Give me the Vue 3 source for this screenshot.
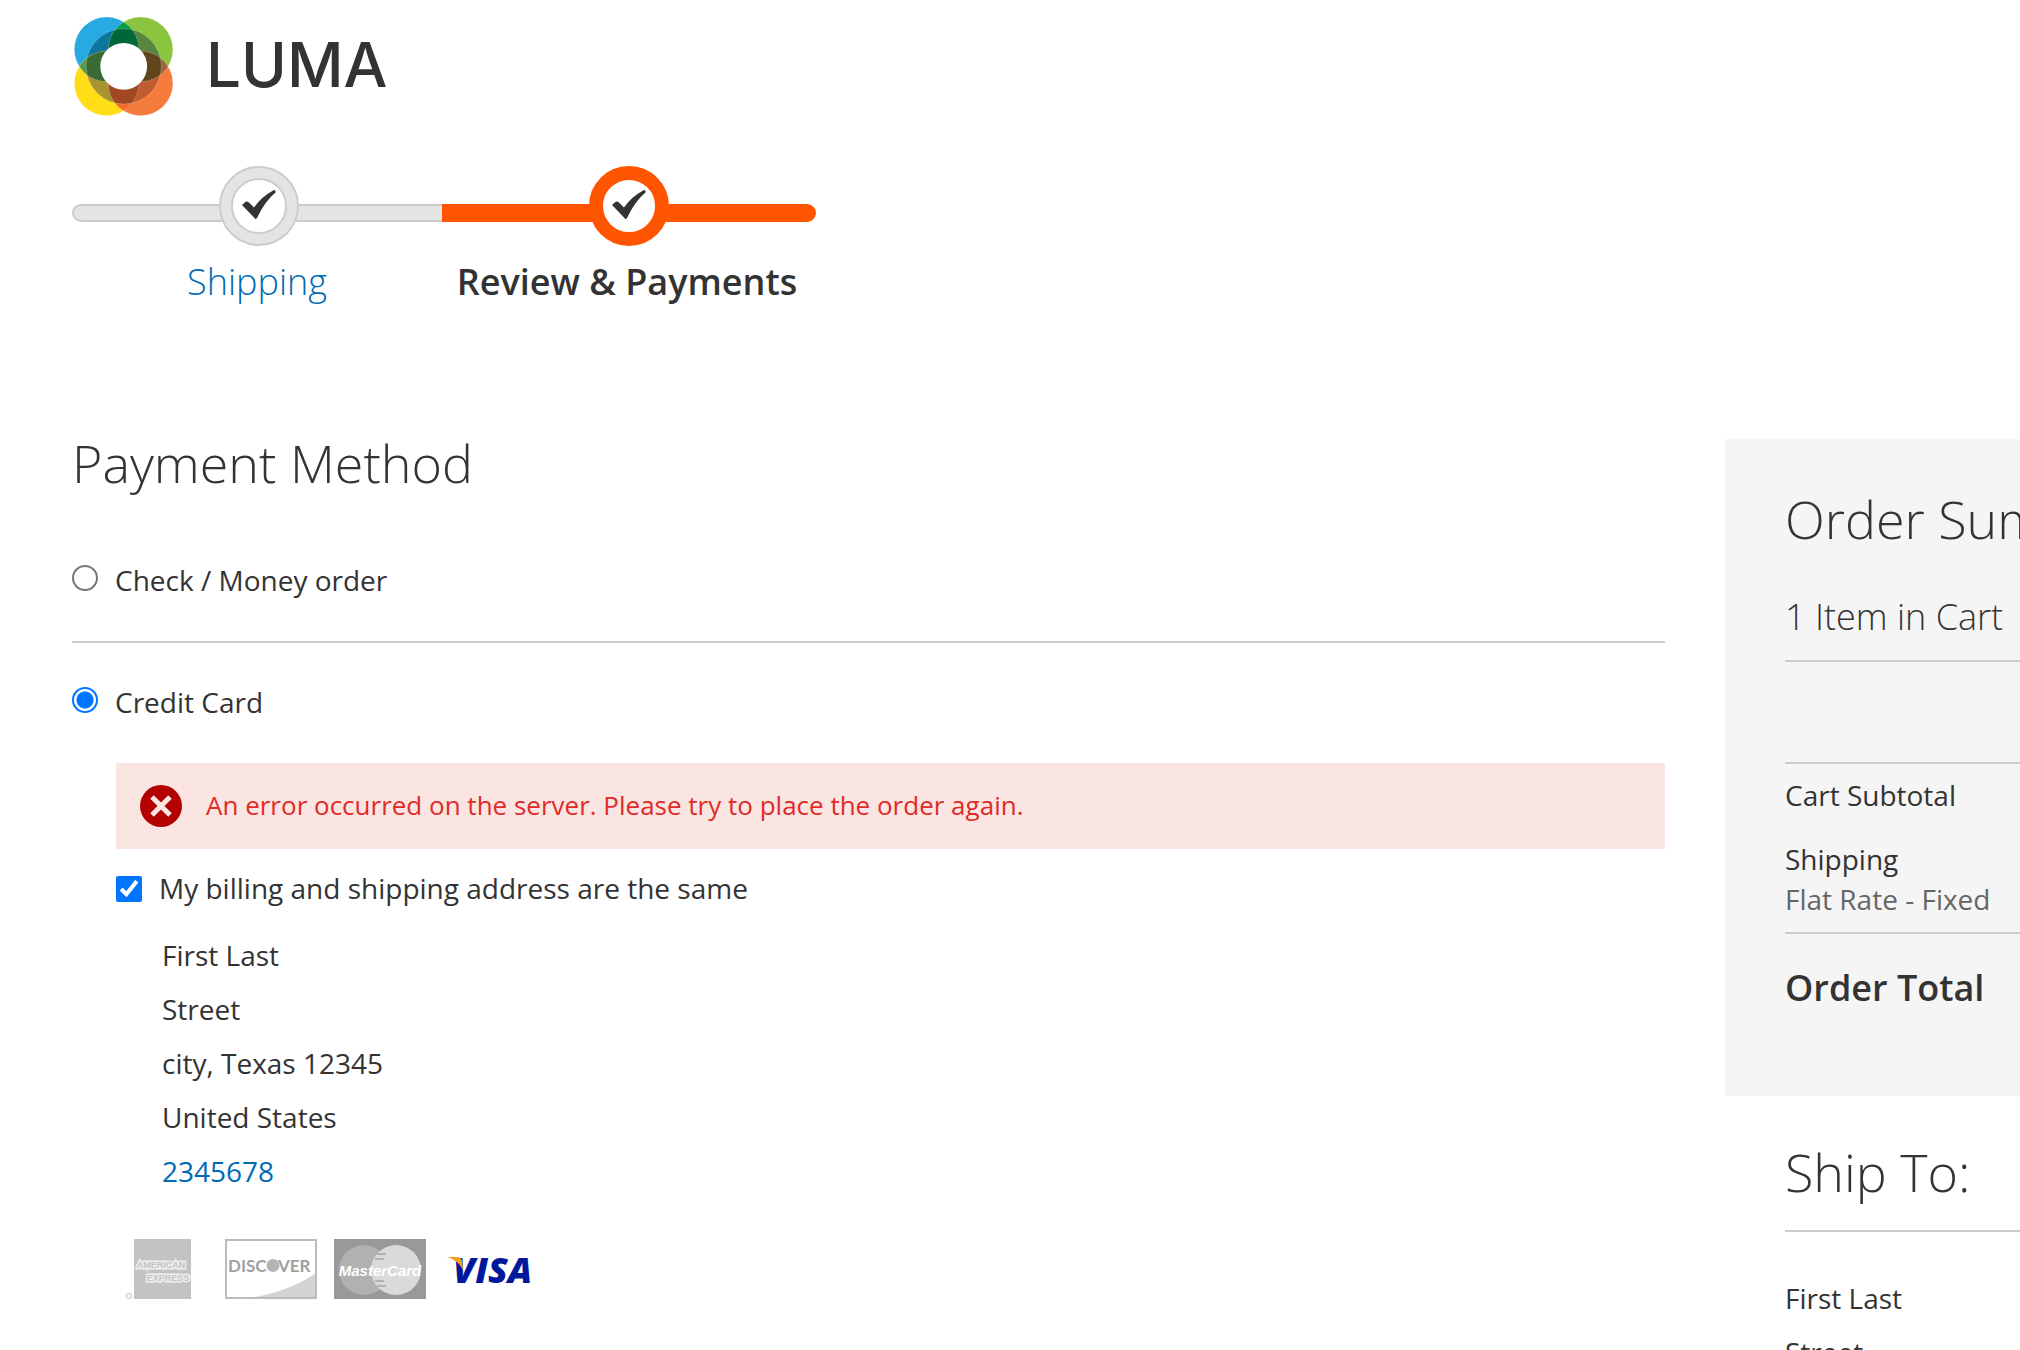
<script setup>
import { ref } from 'vue'

const method = ref('card')
const sameAddress = ref(true)
const steps = [
  { label: 'Shipping', href: '#shipping', active: false },
  { label: 'Review & Payments', href: '', active: true },
]
const address = ['First Last', 'Street', 'city, Texas 12345', 'United States']
</script>

<template>
  <div class="page">
    <header class="header">
      <a class="logo" href="#" aria-label="Luma">
        <svg class="logo-mark" viewBox="0 0 100 100" aria-hidden="true">
          <defs>
            <clipPath id="disc"><circle cx="49.7" cy="49.3" r="37.7" /></clipPath>
            <clipPath id="tl"><circle cx="32.6" cy="32.3" r="32.3" /></clipPath>
            <clipPath id="br"><circle cx="66.6" cy="66.4" r="32.3" /></clipPath>
          </defs>
          <circle cx="32.6" cy="32.3" r="32.3" fill="#27a9e1" />
          <circle cx="66.6" cy="32.3" r="32.3" fill="#8bc53f" />
          <circle cx="32.6" cy="66.4" r="32.3" fill="#ffde17" />
          <circle cx="66.6" cy="66.4" r="32.3" fill="#f47b3b" />
          <g clip-path="url(#tl)">
            <circle cx="66.6" cy="32.3" r="32.3" fill="#00a04a" />
            <circle cx="32.6" cy="66.4" r="32.3" fill="#559b4b" />
          </g>
          <g clip-path="url(#br)">
            <circle cx="66.6" cy="32.3" r="32.3" fill="#94683a" />
            <circle cx="32.6" cy="66.4" r="32.3" fill="#f26a2e" />
          </g>
          <g clip-path="url(#disc)">
            <circle cx="32.6" cy="32.3" r="32.3" fill="#0c769e" />
            <circle cx="66.6" cy="32.3" r="32.3" fill="#57873e" />
            <circle cx="32.6" cy="66.4" r="32.3" fill="#a89430" />
            <circle cx="66.6" cy="66.4" r="32.3" fill="#c05c2f" />
            <g clip-path="url(#tl)">
              <circle cx="66.6" cy="32.3" r="32.3" fill="#006838" />
              <circle cx="32.6" cy="66.4" r="32.3" fill="#3a6b35" />
            </g>
            <g clip-path="url(#br)">
              <circle cx="66.6" cy="32.3" r="32.3" fill="#61461d" />
              <circle cx="32.6" cy="66.4" r="32.3" fill="#9f4823" />
            </g>
          </g>
          <g fill="none" stroke="#fff" stroke-opacity=".35" stroke-width=".6">
            <circle cx="49.7" cy="49.3" r="37.7" />
            <circle cx="32.6" cy="32.3" r="32.3" />
            <circle cx="66.6" cy="32.3" r="32.3" />
            <circle cx="32.6" cy="66.4" r="32.3" />
            <circle cx="66.6" cy="66.4" r="32.3" />
          </g>
          <circle cx="49.7" cy="49.3" r="23.4" fill="#fff" />
        </svg>
        <span class="logo-name">LUMA</span>
      </a>
    </header>

    <ol class="steps">
      <li v-for="s in steps" :key="s.label" class="step" :class="{ active: s.active }">
        <span class="badge">
          <span class="badge-inner">
            <svg viewBox="0 0 52 52" aria-hidden="true">
              <path d="M9 25 L13 21.500 Q15 21 16.500 23 L21 27.500 Q28 17 41 10 Q43 10 42.500 12.500 Q32 21 24 38 Q22.500 40 21.500 38 Z" fill="#333" />
            </svg>
          </span>
        </span>
        <a v-if="s.href" class="step-label" :href="s.href">{{ s.label }}</a>
        <span v-else class="step-label">{{ s.label }}</span>
      </li>
    </ol>

    <div class="columns">
      <main class="payment">
        <h2>Payment Method</h2>
        <div class="method first">
          <label class="choice">
            <input v-model="method" type="radio" name="method" value="check" />
            <span>Check / Money order</span>
          </label>
        </div>
        <div class="method">
          <label class="choice">
            <input v-model="method" type="radio" name="method" value="card" />
            <span>Credit Card</span>
          </label>
          <div class="details">
            <div class="error" role="alert">
              <svg class="error-icon" viewBox="0 0 42 42" aria-hidden="true">
                <circle cx="21" cy="21" r="21" fill="#b30000" />
                <path d="M12 12 L30 30 M30 12 L12 30" stroke="#fae5e3" stroke-width="5" />
              </svg>
              <span>An error occurred on the server. Please try to place the order again.</span>
            </div>
            <label class="choice same">
              <input v-model="sameAddress" type="checkbox" />
              <span>My billing and shipping address are the same</span>
            </label>
            <address class="address billing">
              <span v-for="line in address" :key="line">{{ line }}</span>
              <a href="tel:2345678">2345678</a>
            </address>
            <div class="cards">
              <svg viewBox="0 0 92 60" role="img" aria-label="American Express">
                <rect x="18" width="57" height="60" fill="#c3c3c3" />
                <circle cx="13" cy="57" r="2.500" fill="none" stroke="#ddd" stroke-width="2" />
                <g font-family="Liberation Sans, sans-serif" font-weight="700" font-size="9" fill="#c3c3c3" stroke="#eee" stroke-width="3" paint-order="stroke" text-anchor="middle">
                  <text x="45" y="29">AMERICAN</text>
                  <text x="52" y="42">EXPRESS</text>
                </g>
              </svg>
              <svg viewBox="0 0 92 60" role="img" aria-label="Discover">
                <rect x="1" y="1" width="90" height="58" fill="#fff" />
                <path d="M24 59 Q64 53 91 34 V59 Z" fill="#d3d3d3" />
                <rect x="1" y="1" width="90" height="58" fill="none" stroke="#bcbcbc" stroke-width="2" />
                <g font-family="Lato, sans-serif" font-weight="700" font-size="17" fill="#a0a0a0">
                  <text x="3" y="33">DISC</text>
                  <text x="53" y="33">VER</text>
                </g>
                <circle cx="48" cy="26.500" r="6.500" fill="#b4b4b4" />
              </svg>
              <svg viewBox="0 0 92 60" role="img" aria-label="MasterCard">
                <rect width="92" height="60" fill="#999" />
                <circle cx="30" cy="31" r="25" fill="#b1b1b1" />
                <circle cx="62" cy="31" r="25" fill="#dadada" />
                <path d="M43 15 H52 M41 20 H50 M41 42 H50 M43 47 H52" stroke="#b1b1b1" stroke-width="2" />
                <text x="46" y="37" text-anchor="middle" font-family="Liberation Sans, sans-serif" font-weight="700" font-style="italic" font-size="15" fill="#fff">MasterCard</text>
              </svg>
              <svg viewBox="0 0 92 60" role="img" aria-label="Visa">
                <text x="10" y="44" font-family="Open Sans, sans-serif" font-weight="800" font-style="italic" font-size="36" fill="#00189c">VISA</text>
                <path d="M4 18 H14 Q18 18 19 22 L20 31 Q15 21 4 18 Z" fill="#f99d1c" />
              </svg>
            </div>
          </div>
        </div>
      </main>

      <aside class="sidebar">
        <section class="summary">
          <h2>Order Summary</h2>
          <p class="items">1 Item in Cart</p>
          <table class="totals">
            <tbody>
              <tr><th scope="row" class="subtotal">Cart Subtotal</th></tr>
              <tr>
                <th scope="row" class="shipping">Shipping<span>Flat Rate - Fixed</span></th>
              </tr>
              <tr><th scope="row" class="total">Order Total</th></tr>
            </tbody>
          </table>
        </section>
        <section class="ship-to">
          <h2>Ship To:</h2>
          <address class="address">
            <span v-for="line in address" :key="line">{{ line }}</span>
          </address>
        </section>
      </aside>
    </div>
  </div>
</template>

<style>
body {
  margin: 0;
  background: #fff;
}
</style>

<style scoped>
.page {
  box-sizing: border-box;
  height: 100vh;
  overflow: hidden;
  padding: 17px 0 0 72px;
  color: #333;
  font: 400 28px/40px 'Open Sans', sans-serif;
}
a {
  color: #006bb4;
  text-decoration: none;
}
h2 {
  margin: 0;
  font-size: 52px;
  line-height: 48px;
  font-weight: 300;
  white-space: nowrap;
}
.header {
  display: flex;
}
.logo {
  display: flex;
  align-items: center;
  gap: 32px;
  padding-left: 2px;
  color: #333;
}
.logo-mark {
  width: 100px;
  height: 100px;
}
.logo-name {
  padding-bottom: 4px;
  font: 500 62px/60px Inter, sans-serif;
}
.steps {
  display: flex;
  margin: 49px 0 0;
  padding: 0;
  list-style: none;
}
.step {
  position: relative;
  display: flex;
  flex-direction: column;
  align-items: center;
  gap: 16px;
  width: 374px;
}
.step::before {
  content: '';
  position: absolute;
  top: 38px;
  left: 0;
  right: 0;
  box-sizing: border-box;
  height: 18px;
  border: 2px solid #ccc;
  border-radius: 9px 0 0 9px;
  background: #e4e4e4;
}
.step + .step {
  margin-left: -4px;
}
.step.active::before {
  border-color: #ff5501;
  border-radius: 0 9px 9px 0;
  background: #ff5501;
}
.badge {
  position: relative;
  display: flex;
  box-sizing: border-box;
  width: 80px;
  height: 80px;
  padding: 10px;
  border: 2px solid #ccc;
  border-radius: 50%;
  background: #e4e4e4;
}
.badge-inner {
  flex: 1;
  border: 2px solid #ccc;
  border-radius: 50%;
  background: #fff;
}
.badge-inner svg {
  display: block;
}
.active .badge,
.active .badge-inner {
  border-color: #ff5501;
}
.active .badge {
  background: #ff5501;
}
.step-label {
  padding-right: 4px;
  font-size: 36px;
  font-weight: 300;
}
.active .step-label {
  font-weight: 600;
}
.columns {
  display: flex;
  align-items: flex-start;
  gap: 60px;
  margin-top: 137px;
}
.payment {
  flex: 1;
  min-width: 0;
}
.method {
  padding-top: 39px;
}
.method.first {
  padding: 73px 0 41px;
  border-bottom: 2px solid #ccc;
}
.choice {
  display: flex;
  align-items: center;
  gap: 17px;
}
.choice input {
  flex: none;
  box-sizing: border-box;
  width: 26px;
  height: 26px;
  margin: 0;
  accent-color: #0075ff;
}
.choice input[type='radio'] {
  appearance: none;
  margin-bottom: 4px;
  border: 2px solid #767676;
  border-radius: 50%;
  background: #fff;
}
.choice input[type='radio']:checked {
  padding: 3px;
  border-color: #0075ff;
  background: #0075ff content-box;
  background-image: radial-gradient(circle, #0075ff 8px, #fff 9px);
  background-clip: border-box;
  background-origin: border-box;
}
.choice input[type='checkbox'] {
  margin-top: 2px;
}
.details {
  margin: 41px 0 0 44px;
}
.error {
  display: flex;
  align-items: center;
  gap: 24px;
  padding: 22px 24px;
  background: #fae5e3;
  color: #e02b27;
  font-size: 26px;
}
.error span {
  padding-bottom: 2px;
}
.error-icon {
  width: 42px;
  height: 42px;
}
.same {
  margin-top: 19px;
}
.address {
  display: flex;
  flex-direction: column;
  align-items: flex-start;
  font-style: normal;
  line-height: 54px;
}
.billing {
  margin: 20px 0 0 46px;
}
.cards {
  display: flex;
  gap: 17px;
  margin-top: 41px;
}
.cards svg {
  width: 92px;
  height: 60px;
}
.sidebar {
  flex: 0 0 295px;
  overflow: hidden;
}
.summary {
  padding: 56px 0 88px 60px;
  background: #f5f5f5;
}
.items {
  margin: 54px 0 100px;
  padding-bottom: 23px;
  border-bottom: 2px solid #ccc;
  font-size: 36px;
  font-weight: 300;
  white-space: nowrap;
}
.totals {
  width: 100%;
  border-spacing: 0;
  border-top: 2px solid #ccc;
}
.totals th {
  padding: 0;
  font-weight: 400;
  text-align: left;
}
.totals .subtotal {
  padding: 11px 0;
}
.totals .shipping {
  padding: 13px 0;
}
.totals .shipping span {
  display: block;
  color: #666;
}
.totals .total {
  padding-top: 34px;
  border-top: 2px solid #ccc;
  font-size: 36px;
  font-weight: 600;
}
.ship-to {
  padding: 52px 0 0 60px;
}
.ship-to h2 {
  margin-bottom: 39px;
  padding-bottom: 34px;
  border-bottom: 2px solid #ccc;
}
</style>
